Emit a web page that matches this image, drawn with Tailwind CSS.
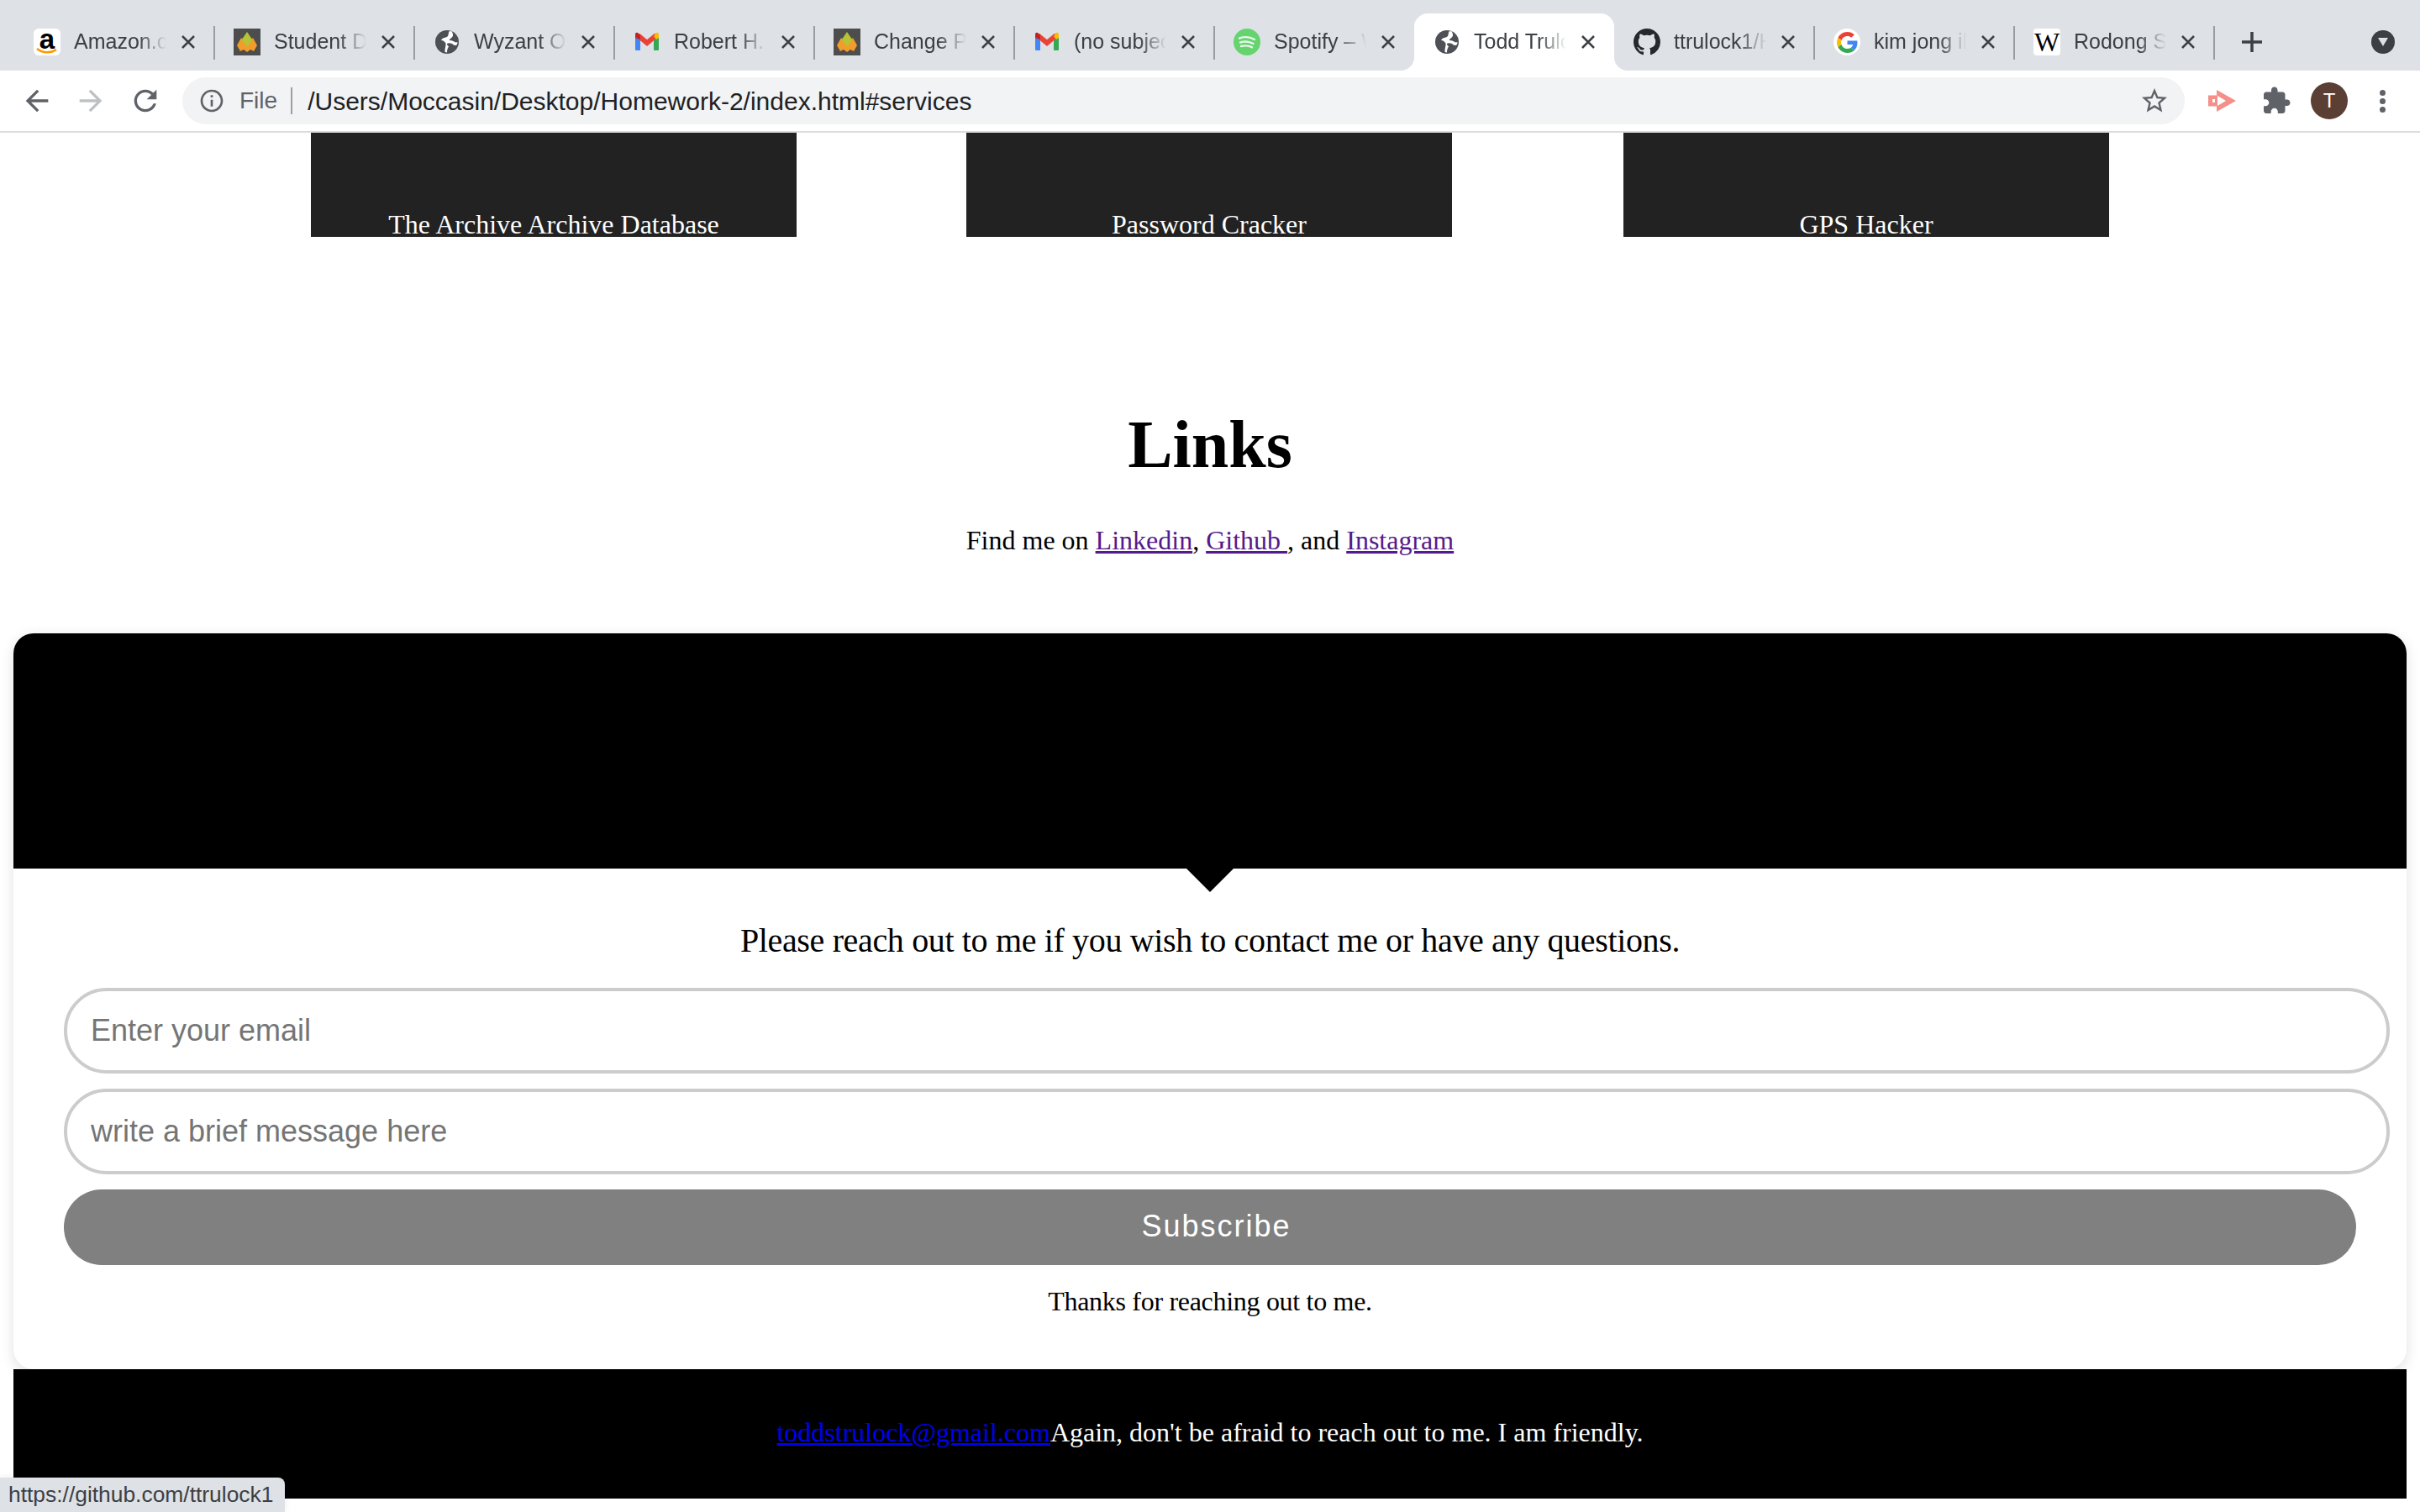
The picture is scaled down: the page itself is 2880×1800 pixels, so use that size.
<!DOCTYPE html>
<html lang="en">
<head>
    <meta charset="UTF-8">
    <title>Todd Trulock</title>
    <script src="https://cdn.jsdelivr.net/npm/@tailwindcss/browser@4"></script>
</head>
<body class="relative w-[2880px] h-[1800px] overflow-hidden bg-white font-['Liberation_Serif',serif] text-black">

    <!-- icon sprites -->
    <svg class="hidden">
        <symbol id="globe" viewBox="0 0 32 32">
            <circle cx="16" cy="16" r="14" fill="#4d5156"/>
            <path d="M19 3c-2 2-.5 4.500-2.500 6.500-2 1.800-6 1-7.500 4.500 3 0 3.500 1.500 5.500 3.500 .5 3-1.500 6-1 10.500l2.500.5c0-3 .5-5 2-7-1-1.500-2.500-2-2-3.500 2.500-1.500 5.500-.5 8 1.500 2 1 3 .5 4-.5l.5-3c-2 1-3.500 0-5-1-1.500-1-4-1-5-1 1-2.500 4-3 4.500-5.500 .5-2-1-3.500-1-5z" fill="#fff"/>
        </symbol>
        <symbol id="flame" viewBox="0 0 32 32">
            <rect width="32" height="32" fill="#4d4d4d"/>
            <path d="M9 11l7 8 7-8 5 9-4 7-4-2-4 3-4-3-4 2-4-7z" fill="#f29c2b"/>
            <path d="M16 4l6.500 9.500-6.500 8-6.500-8z" fill="#b5c334"/>
        </symbol>
        <symbol id="gmail" viewBox="0 0 32 32">
            <rect x="2" y="9" width="6" height="17" rx="1" fill="#4285f4"/>
            <rect x="24" y="9" width="6" height="17" rx="1" fill="#34a853"/>
            <path d="M5 8l11 9 11-9" fill="none" stroke="#ea4335" stroke-width="6"/>
            <path d="M24 9l3-4c2-.5 3 .5 3 2v4l-3 2z" fill="#fbbc04"/>
            <path d="M2 11V7c0-1.500 1-2.500 3-2l3 3v5z" fill="#c5221f"/>
        </symbol>
        <symbol id="spotify" viewBox="0 0 32 32">
            <circle cx="16" cy="16" r="16" fill="#65d46e"/>
            <path d="M7 11.500c6-2 13-1.500 18 1.500M8 16.500c5-1.500 11-1 15.500 1.500M9 21c4.500-1 9.500-.8 13 1.300" fill="none" stroke="#e8f5e9" stroke-width="2.400" stroke-linecap="round"/>
        </symbol>
    </svg>

    <!-- tab strip -->
    <div class="flex items-end h-[84px] pl-[17px] bg-[#dee1e6] font-['Liberation_Sans',sans-serif] text-[25px] text-[#3c4043]">

        <div class="flex items-center shrink-0 w-[238px] h-[68px] pl-[23px]">
            <div class="relative w-8 h-8 shrink-0 rounded-md bg-white text-center text-black font-bold text-[33px] leading-[25px]">a
                <svg class="absolute left-[3px] top-[23px] w-[26px] h-2" viewBox="0 0 26 8"><path d="M1 1c6 5 16 6 23 1" fill="none" stroke="#f90" stroke-width="2.500"/></svg>
            </div>
            <span class="w-[110px] ml-4 shrink-0 overflow-hidden whitespace-nowrap [mask-image:linear-gradient(to_right,black_70%,transparent)]">Amazon.com</span>
            <svg class="w-4 h-4 ml-[18px] shrink-0" viewBox="0 0 16 16"><path d="M1 1l14 14M15 1L1 15" stroke="#3c4043" stroke-width="2.500"/></svg>
            <span class="w-[2px] h-10 ml-auto mr-[-1px] mt-[2px] shrink-0 bg-[#9a9ca0]"></span>
        </div>

        <div class="flex items-center shrink-0 w-[238px] h-[68px] pl-[23px]">
            <svg class="w-8 h-8 shrink-0"><use href="#flame"/></svg>
            <span class="w-[110px] ml-4 shrink-0 overflow-hidden whitespace-nowrap [mask-image:linear-gradient(to_right,black_70%,transparent)]">Student Dashboard</span>
            <svg class="w-4 h-4 ml-[18px] shrink-0" viewBox="0 0 16 16"><path d="M1 1l14 14M15 1L1 15" stroke="#3c4043" stroke-width="2.500"/></svg>
            <span class="w-[2px] h-10 ml-auto mr-[-1px] mt-[2px] shrink-0 bg-[#9a9ca0]"></span>
        </div>

        <div class="flex items-center shrink-0 w-[238px] h-[68px] pl-[23px]">
            <svg class="w-8 h-8 shrink-0"><use href="#globe"/></svg>
            <span class="w-[110px] ml-4 shrink-0 overflow-hidden whitespace-nowrap [mask-image:linear-gradient(to_right,black_70%,transparent)]">Wyzant Online</span>
            <svg class="w-4 h-4 ml-[18px] shrink-0" viewBox="0 0 16 16"><path d="M1 1l14 14M15 1L1 15" stroke="#3c4043" stroke-width="2.500"/></svg>
            <span class="w-[2px] h-10 ml-auto mr-[-1px] mt-[2px] shrink-0 bg-[#9a9ca0]"></span>
        </div>

        <div class="flex items-center shrink-0 w-[238px] h-[68px] pl-[23px]">
            <svg class="w-8 h-8 shrink-0"><use href="#gmail"/></svg>
            <span class="w-[110px] ml-4 shrink-0 overflow-hidden whitespace-nowrap [mask-image:linear-gradient(to_right,black_70%,transparent)]">Robert H. Smith</span>
            <svg class="w-4 h-4 ml-[18px] shrink-0" viewBox="0 0 16 16"><path d="M1 1l14 14M15 1L1 15" stroke="#3c4043" stroke-width="2.500"/></svg>
            <span class="w-[2px] h-10 ml-auto mr-[-1px] mt-[2px] shrink-0 bg-[#9a9ca0]"></span>
        </div>

        <div class="flex items-center shrink-0 w-[238px] h-[68px] pl-[23px]">
            <svg class="w-8 h-8 shrink-0"><use href="#flame"/></svg>
            <span class="w-[110px] ml-4 shrink-0 overflow-hidden whitespace-nowrap [mask-image:linear-gradient(to_right,black_70%,transparent)]">Change Password</span>
            <svg class="w-4 h-4 ml-[18px] shrink-0" viewBox="0 0 16 16"><path d="M1 1l14 14M15 1L1 15" stroke="#3c4043" stroke-width="2.500"/></svg>
            <span class="w-[2px] h-10 ml-auto mr-[-1px] mt-[2px] shrink-0 bg-[#9a9ca0]"></span>
        </div>

        <div class="flex items-center shrink-0 w-[238px] h-[68px] pl-[23px]">
            <svg class="w-8 h-8 shrink-0"><use href="#gmail"/></svg>
            <span class="w-[110px] ml-4 shrink-0 overflow-hidden whitespace-nowrap [mask-image:linear-gradient(to_right,black_70%,transparent)]">(no subject)</span>
            <svg class="w-4 h-4 ml-[18px] shrink-0" viewBox="0 0 16 16"><path d="M1 1l14 14M15 1L1 15" stroke="#3c4043" stroke-width="2.500"/></svg>
            <span class="w-[2px] h-10 ml-auto mr-[-1px] mt-[2px] shrink-0 bg-[#9a9ca0]"></span>
        </div>

        <div class="flex items-center shrink-0 w-[238px] h-[68px] pl-[23px]">
            <svg class="w-8 h-8 shrink-0"><use href="#spotify"/></svg>
            <span class="w-[110px] ml-4 shrink-0 overflow-hidden whitespace-nowrap [mask-image:linear-gradient(to_right,black_70%,transparent)]">Spotify – Web</span>
            <svg class="w-4 h-4 ml-[18px] shrink-0" viewBox="0 0 16 16"><path d="M1 1l14 14M15 1L1 15" stroke="#3c4043" stroke-width="2.500"/></svg>
        </div>

        <!-- active tab -->
        <div class="relative flex items-center shrink-0 w-[238px] h-[68px] pl-[23px] bg-white rounded-t-2xl">
            <span class="absolute left-[-16px] bottom-0 w-4 h-4 bg-[radial-gradient(circle_at_0_0,#dee1e6_15.500px,white_16.500px)]"></span>
            <span class="absolute right-[-16px] bottom-0 w-4 h-4 bg-[radial-gradient(circle_at_100%_0,#dee1e6_15.500px,white_16.500px)]"></span>
            <svg class="w-8 h-8 shrink-0"><use href="#globe"/></svg>
            <span class="w-[110px] ml-4 shrink-0 overflow-hidden whitespace-nowrap [mask-image:linear-gradient(to_right,black_70%,transparent)]">Todd Trulock</span>
            <svg class="w-4 h-4 ml-[18px] shrink-0" viewBox="0 0 16 16"><path d="M1 1l14 14M15 1L1 15" stroke="#3c4043" stroke-width="2.500"/></svg>
        </div>

        <div class="flex items-center shrink-0 w-[238px] h-[68px] pl-[23px]">
            <svg class="w-8 h-8 shrink-0" viewBox="0 0 16 16"><path fill="#24292e" d="M8 0C3.580 0 0 3.580 0 8c0 3.540 2.290 6.530 5.470 7.590.4.070.55-.17.55-.38 0-.19-.01-.82-.01-1.490-2.010.37-2.530-.49-2.690-.94-.09-.23-.48-.94-.82-1.130-.28-.15-.68-.52-.01-.53.63-.01 1.080.58 1.230.82.72 1.210 1.870.87 2.330.66.07-.52.28-.87.51-1.070-1.780-.2-3.640-.89-3.640-3.950 0-.87.31-1.590.82-2.150-.08-.2-.36-1.020.08-2.120 0 0 .67-.21 2.200.82.64-.18 1.320-.27 2-.27.68 0 1.360.09 2 .27 1.530-1.040 2.200-.82 2.200-.82.44 1.100.16 1.920.08 2.120.51.56.82 1.270.82 2.150 0 3.070-1.870 3.750-3.650 3.950.29.25.54.73.54 1.480 0 1.070-.01 1.930-.01 2.200 0 .21.15.46.55.38A8.013 8.013 0 0016 8c0-4.420-3.580-8-8-8z"/></svg>
            <span class="w-[110px] ml-4 shrink-0 overflow-hidden whitespace-nowrap [mask-image:linear-gradient(to_right,black_70%,transparent)]">ttrulock1/Homework</span>
            <svg class="w-4 h-4 ml-[18px] shrink-0" viewBox="0 0 16 16"><path d="M1 1l14 14M15 1L1 15" stroke="#3c4043" stroke-width="2.500"/></svg>
            <span class="w-[2px] h-10 ml-auto mr-[-1px] mt-[2px] shrink-0 bg-[#9a9ca0]"></span>
        </div>

        <div class="flex items-center shrink-0 w-[238px] h-[68px] pl-[23px]">
            <span class="flex items-center justify-center w-8 h-8 shrink-0 rounded-full bg-white">
                <svg class="w-[25px] h-[25px]" viewBox="0 0 48 48">
                    <path fill="#EA4335" d="M24 9.500c3.540 0 6.710 1.220 9.210 3.600l6.850-6.850C35.900 2.380 30.470 0 24 0 14.620 0 6.510 5.380 2.560 13.220l7.980 6.190C12.430 13.720 17.740 9.500 24 9.500z"/>
                    <path fill="#4285F4" d="M46.980 24.550c0-1.570-.15-3.090-.38-4.550H24v9.020h12.940c-.58 2.960-2.260 5.480-4.780 7.180l7.730 6c4.510-4.180 7.090-10.360 7.090-17.650z"/>
                    <path fill="#FBBC05" d="M10.530 28.590c-.48-1.450-.76-2.990-.76-4.590s.27-3.140.76-4.590l-7.980-6.190C.92 16.460 0 20.120 0 24c0 3.880.92 7.540 2.560 10.780l7.970-6.190z"/>
                    <path fill="#34A853" d="M24 48c6.480 0 11.930-2.130 15.890-5.810l-7.730-6c-2.150 1.450-4.920 2.300-8.160 2.300-6.260 0-11.570-4.220-13.470-9.910l-7.980 6.190C6.510 42.620 14.620 48 24 48z"/>
                </svg>
            </span>
            <span class="w-[110px] ml-4 shrink-0 overflow-hidden whitespace-nowrap [mask-image:linear-gradient(to_right,black_70%,transparent)]">kim jong il</span>
            <svg class="w-4 h-4 ml-[18px] shrink-0" viewBox="0 0 16 16"><path d="M1 1l14 14M15 1L1 15" stroke="#3c4043" stroke-width="2.500"/></svg>
            <span class="w-[2px] h-10 ml-auto mr-[-1px] mt-[2px] shrink-0 bg-[#9a9ca0]"></span>
        </div>

        <div class="flex items-center shrink-0 w-[238px] h-[68px] pl-[23px]">
            <span class="w-8 h-8 shrink-0 rounded-sm bg-white text-center text-black font-['Liberation_Serif',serif] text-[32px] leading-8">W</span>
            <span class="w-[110px] ml-4 shrink-0 overflow-hidden whitespace-nowrap [mask-image:linear-gradient(to_right,black_70%,transparent)]">Rodong Sinmun</span>
            <svg class="w-4 h-4 ml-[18px] shrink-0" viewBox="0 0 16 16"><path d="M1 1l14 14M15 1L1 15" stroke="#3c4043" stroke-width="2.500"/></svg>
            <span class="w-[2px] h-10 ml-auto mr-[-1px] mt-[2px] shrink-0 bg-[#9a9ca0]"></span>
        </div>

        <svg class="w-6 h-6 ml-[33px] mb-[22px] shrink-0" viewBox="0 0 24 24"><path d="M12 0v24M0 12h24" stroke="#3c4043" stroke-width="3.500"/></svg>
        <span class="flex items-center justify-center w-7 h-7 ml-[130px] mb-5 shrink-0 rounded-full bg-[#3c4043]">
            <svg class="w-3 h-3" viewBox="0 0 12 12"><path d="M0 1h12L6 11z" fill="#dee1e6"/></svg>
        </span>
    </div>

    <!-- toolbar -->
    <div class="flex items-center h-[74px] pl-[24px] border-b-2 border-[#dcdde2] font-['Liberation_Sans',sans-serif]">
        <svg class="w-10 h-10 shrink-0" viewBox="0 0 24 24" fill="#5f6368"><path d="M20 11H7.830l5.590-5.590L12 4l-8 8 8 8 1.410-1.410L7.830 13H20v-2z"/></svg>
        <svg class="w-10 h-10 ml-[24px] shrink-0" viewBox="0 0 24 24" fill="#bdc1c6"><path d="M4 11h12.170l-5.590-5.590L12 4l8 8-8 8-1.410-1.410L16.170 13H4v-2z"/></svg>
        <svg class="w-10 h-10 ml-[25px] shrink-0" viewBox="0 0 24 24" fill="#5f6368"><path d="M17.650 6.350C16.200 4.900 14.210 4 12 4c-4.420 0-7.990 3.580-7.990 8s3.570 8 7.990 8c3.730 0 6.840-2.550 7.730-6h-2.080c-.82 2.330-3.040 4-5.650 4-3.310 0-6-2.690-6-6s2.690-6 6-6c1.660 0 3.140.69 4.220 1.780L13 11h7V4l-2.350 2.350z"/></svg>

        <div class="flex items-center w-[2383px] h-14 ml-[24px] pl-[19px] pr-[18px] shrink-0 rounded-full bg-[#f1f3f4]">
            <svg class="w-8 h-8 shrink-0" viewBox="0 0 24 24" fill="#5f6368"><path d="M11 7h2v2h-2zm0 4h2v6h-2zm1-9C6.480 2 2 6.480 2 12s4.480 10 10 10 10-4.480 10-10S17.520 2 12 2zm0 18c-4.410 0-8-3.590-8-8s3.590-8 8-8 8 3.590 8 8-3.590 8-8 8z"/></svg>
            <span class="ml-[17px] text-[28px] text-[#5f6368]">File</span>
            <span class="w-[2px] h-8 ml-4 bg-[#9aa0a6]"></span>
            <span class="ml-[18px] text-[30px] text-[#202124]">/Users/Moccasin/Desktop/Homework-2/index.html#services</span>
            <svg class="w-9 h-9 ml-auto shrink-0" viewBox="0 0 24 24" fill="#5f6368"><path d="M22 9.240l-7.190-.62L12 2 9.190 8.630 2 9.240l5.460 4.730L5.820 21 12 17.270 18.180 21l-1.630-7.030L22 9.240zM12 15.400l-3.760 2.270 1-4.280-3.320-2.880 4.380-.38L12 6.100l1.710 4.040 4.380.38-3.320 2.880 1 4.280L12 15.400z"/></svg>
        </div>

        <svg class="w-[34px] h-[26px] ml-[28px] shrink-0" viewBox="0 0 34 26">
            <path d="M0 6.500h10V0l23 13-23 13v-6.500H0z" fill="#f48f8a"/>
            <path d="M11 7l10 6-10 6zM5 11h3v4H5z" fill="#fff"/>
        </svg>
        <svg class="w-9 h-9 ml-[29px] shrink-0" viewBox="0 0 24 24" fill="#5f6368"><path d="M20.500 11H19V7c0-1.100-.9-2-2-2h-4V3.500C13 2.120 11.880 1 10.500 1S8 2.120 8 3.500V5H4c-1.100 0-1.990.9-1.990 2v3.800H3.500c1.490 0 2.700 1.210 2.700 2.700s-1.210 2.700-2.700 2.700H2V20c0 1.100.9 2 2 2h3.800v-1.500c0-1.490 1.210-2.700 2.700-2.700 1.490 0 2.700 1.210 2.700 2.700V22H17c1.100 0 2-.9 2-2v-4h1.500c1.380 0 2.500-1.120 2.500-2.500S21.880 11 20.500 11z"/></svg>
        <span class="flex items-center justify-center w-11 h-11 ml-[23px] shrink-0 rounded-full bg-[#5b3f35] text-white text-[24px]">T</span>
        <span class="flex flex-col gap-[3px] ml-[38px] shrink-0">
            <i class="w-[7px] h-[7px] rounded-full bg-[#5f6368]"></i>
            <i class="w-[7px] h-[7px] rounded-full bg-[#5f6368]"></i>
            <i class="w-[7px] h-[7px] rounded-full bg-[#5f6368]"></i>
        </span>
    </div>

    <!-- services cards, scrolled mostly out of view -->
    <div class="flex h-[124px] pl-[370px] text-white text-[32px] leading-[30px] text-center">
        <div class="flex items-end justify-center w-[578px] bg-[#222]">The Archive Archive Database</div>
        <div class="flex items-end justify-center w-[578px] ml-[202px] bg-[#222]">Password Cracker</div>
        <div class="flex items-end justify-center w-[578px] ml-[204px] bg-[#222]">GPS Hacker</div>
    </div>

    <!-- links -->
    <h2 class="mt-[201px] text-center text-[80px] leading-[92px] font-bold">Links</h2>
    <p class="mt-[50px] text-center text-[32px] leading-9">Find me on <a href="#" class="underline text-[#551a8b]">Linkedin</a>, <a href="#" class="underline text-[#551a8b]">Github </a>, and <a href="#" class="underline text-[#551a8b]">Instagram</a></p>

    <!-- contact card -->
    <div class="relative mx-4 mt-[93px] h-[876px] rounded-3xl bg-white shadow-[0_4px_16px_rgba(0,0,0,0.12)]">
        <div class="relative h-[280px] rounded-t-3xl bg-black">
            <span class="absolute left-[1396px] top-full border-x-[28px] border-t-[28px] border-x-transparent border-t-black"></span>
        </div>
        <p class="mt-[66px] text-center text-[40px] leading-10 tracking-[-0.35px]">Please reach out to me if you wish to contact me or have any questions.</p>
        <form class="flex flex-col gap-[18px] mt-9 ml-[60px] font-['Liberation_Sans',sans-serif]">
            <input type="text" placeholder="Enter your email" class="w-[2768px] h-[102px] pl-7 rounded-[51px] border-4 border-[#ccc] text-[36px] placeholder:text-[#757575]">
            <input type="text" placeholder="write a brief message here" class="w-[2768px] h-[102px] pl-7 rounded-[51px] border-4 border-[#ccc] text-[36px] placeholder:text-[#757575]">
            <button type="button" class="w-[2728px] h-[90px] pl-[15px] pb-[2px] rounded-[45px] bg-[#808080] text-white text-[36px] tracking-[2px]">Subscribe</button>
        </form>
        <p class="mt-[25px] text-center text-[32px] leading-9 tracking-[-0.3px]">Thanks for reaching out to me.</p>
    </div>

    <!-- footer -->
    <footer class="relative mx-4 h-[154px] pt-[57px] bg-black text-center text-white text-[32px] leading-9"><a href="#" class="underline text-[#0000ee]">toddstrulock@gmail.com</a>Again, don't be afraid to reach out to me. I am friendly.</footer>

    <!-- link status bubble -->
    <div class="absolute left-0 bottom-0 w-[339px] h-[41px] pl-[10px] rounded-tr-lg bg-[#dee1e6] font-['Liberation_Sans',sans-serif] text-[26.400px] leading-[41px] text-[#3c4043] shadow-[0_0_8px_rgba(0,0,0,0.08)]">https://github.com/ttrulock1</div>

</body>
</html>
